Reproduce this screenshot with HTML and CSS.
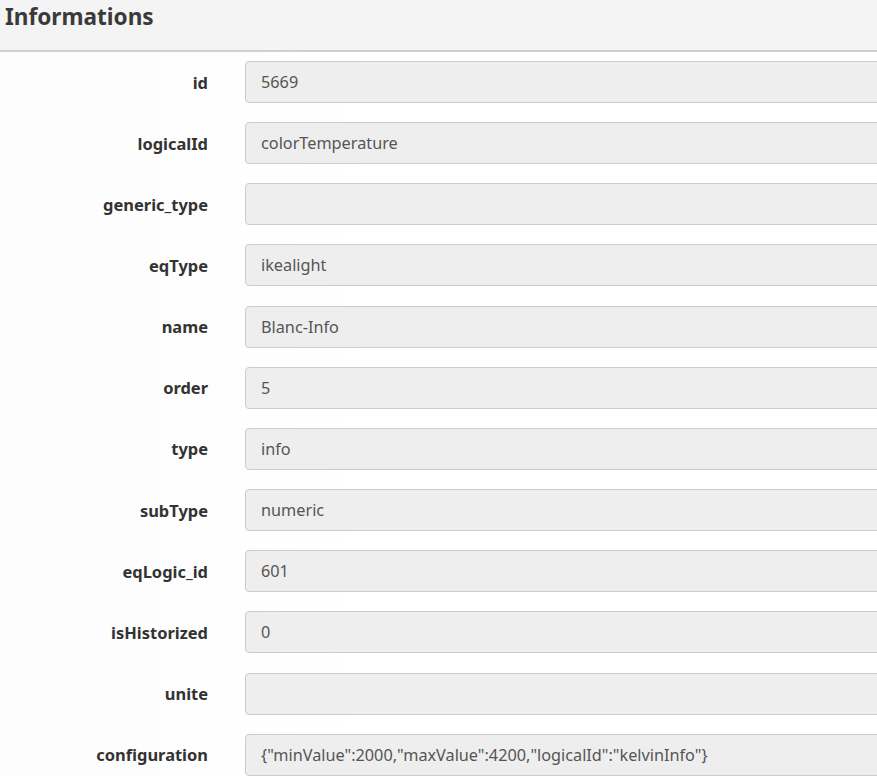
FILE: index.html
```html
<!DOCTYPE html>
<html>
<head>
<meta charset="utf-8">
<link rel="stylesheet" href="styles.css">
</head>
<body>
<div class="panel">
  <div class="panel-heading"><h3 class="title">Informations</h3></div>
  <div class="panel-body">
    <div class="row"><label class="lbl">id</label><div class="field">5669</div></div>
    <div class="row"><label class="lbl">logicalId</label><div class="field">colorTemperature</div></div>
    <div class="row"><label class="lbl">generic_type</label><div class="field"></div></div>
    <div class="row"><label class="lbl">eqType</label><div class="field">ikealight</div></div>
    <div class="row"><label class="lbl">name</label><div class="field">Blanc-Info</div></div>
    <div class="row"><label class="lbl">order</label><div class="field">5</div></div>
    <div class="row"><label class="lbl">type</label><div class="field">info</div></div>
    <div class="row"><label class="lbl">subType</label><div class="field">numeric</div></div>
    <div class="row"><label class="lbl">eqLogic_id</label><div class="field">601</div></div>
    <div class="row"><label class="lbl">isHistorized</label><div class="field">0</div></div>
    <div class="row"><label class="lbl">unite</label><div class="field"></div></div>
    <div class="row"><label class="lbl">configuration</label><div class="field">{"minValue":2000,"maxValue":4200,"logicalId":"kelvinInfo"}</div></div>
  </div>
</div>
</body>
</html>
```
FILE: styles.css
```css
html, body {
  margin: 0;
  padding: 0;
  overflow: hidden;
  background: #fff;
  font-family: "Noto Sans", "Open Sans", sans-serif;
  color: #333;
}
.panel {
  width: 900px;
}
.panel-heading {
  background: #f4f4f4;
  border-bottom: 2px solid #cfcfcf;
  box-sizing: border-box;
  height: 52px;
  padding: 0 5px;
}
.title {
  margin: 0;
  font-size: 22.6px;
  font-weight: 700;
  line-height: 33px;
  color: #3a3a3a;
}
.panel-body {
  padding-top: 9px;
  background: linear-gradient(to right, #fcfcfc, #ffffff 40%);
}
.row {
  display: grid;
  grid-template-columns: 208px 1fr;
  column-gap: 37px;
  align-items: center;
  margin-bottom: 19.17px;
}
.lbl {
  text-align: right;
  font-weight: 700;
  font-size: 16.45px;
  color: #333;
}
.field {
  height: 42px;
  box-sizing: border-box;
  border: 1px solid #cccccc;
  border-radius: 4px;
  background: #eeeeee;
  padding: 0 15px;
  font-size: 16.25px;
  line-height: 40px;
  color: #555;
  white-space: nowrap;
}
```
